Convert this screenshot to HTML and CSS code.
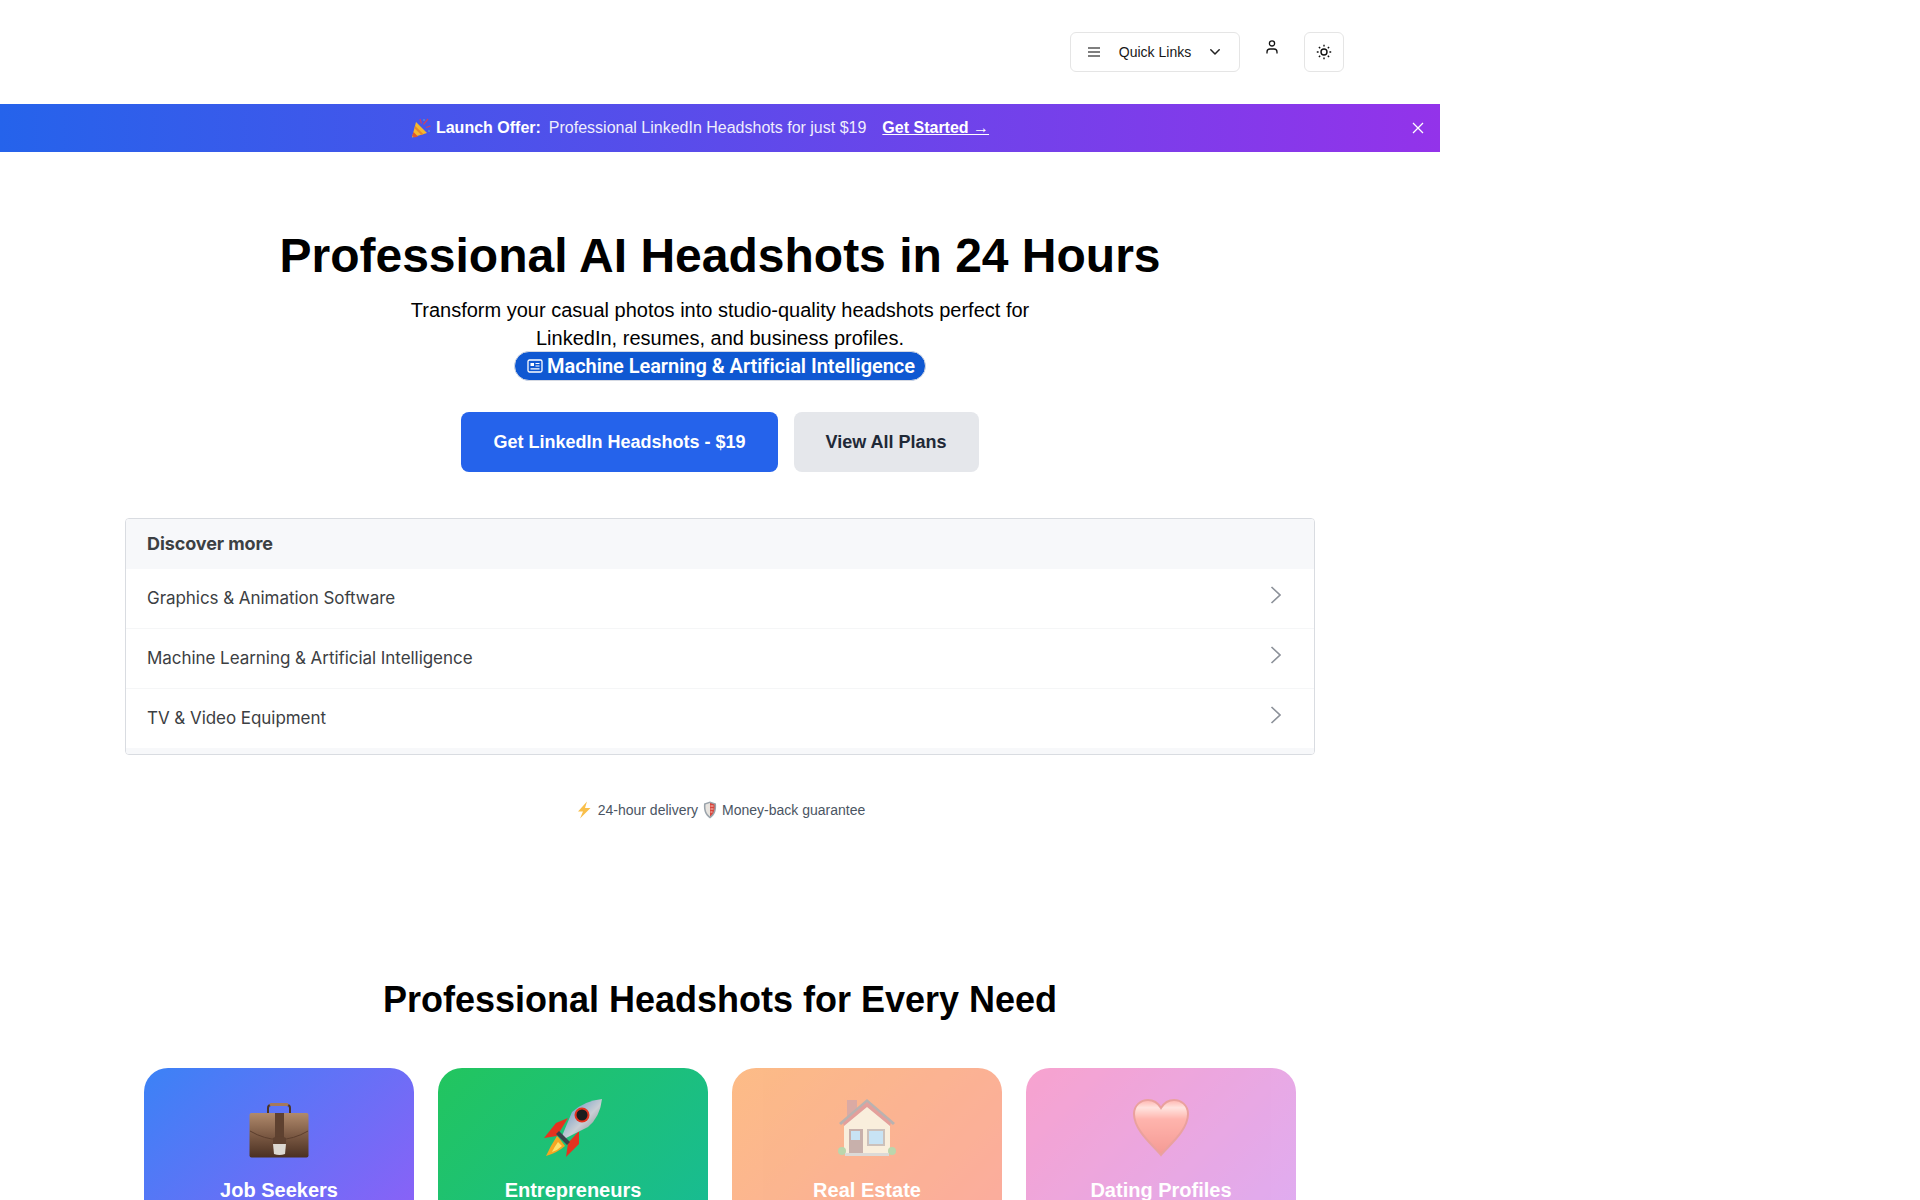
FILE: index.html
```html
<!DOCTYPE html>
<html>
<head>
    <title>Professional AI Headshots in 24 Hours</title>
    <link rel="stylesheet" href="styles.css">
</head>
<body>
<div class="page">
    <!-- Header -->
    <header class="top-bar">
        <button class="quick-links">
            <svg viewBox="0 0 12 10" width="12" height="10"><path d="M0 1h12M0 5h12M0 9h12" stroke="#555" stroke-width="1.600" fill="none"/></svg>
            <span>Quick Links</span>
            <svg viewBox="0 0 10 6" width="10" height="6"><path d="M.8.8 5 5 9.200.8" stroke="#222" stroke-width="1.500" fill="none" stroke-linecap="round" stroke-linejoin="round"/></svg>
        </button>
        <a class="user-link" href="#">
            <svg viewBox="0 0 12 14" width="12" height="14"><circle cx="6" cy="3.400" r="2.600" stroke="#111" stroke-width="1.300" fill="none"/><path d="M1 13.500v-1.500a3 3 0 0 1 3-3h4a3 3 0 0 1 3 3v1.500" stroke="#111" stroke-width="1.300" fill="none"/></svg>
        </a>
        <button class="theme-btn">
            <svg viewBox="0 0 16 16" width="16" height="16"><circle cx="8" cy="8" r="3" stroke="#111" stroke-width="1.400" fill="none"/><path d="M8 .8v1.800M8 13.400v1.800M.8 8h1.800M13.400 8h1.800M2.900 2.900 4.200 4.200M11.800 11.800l1.300 1.300M2.900 13.100l1.300-1.300M11.800 4.200l1.300-1.300" stroke="#111" stroke-width="1.400" fill="none"/></svg>
        </button>
    </header>

    <!-- Banner -->
    <div class="offer-bar">
        <div class="offer-text">
            <svg viewBox="0 0 20 20" width="20" height="20">
                <path d="M1 19.500 5 4l11 11z" fill="#f5b82e"/>
                <path d="M2.500 14l4.500 4.500-4 1-1.800-1.800z" fill="#e0562d"/>
                <path d="M4.200 8l8.300 8.300-2.200.8-6.800-6.800z" fill="#e9862c"/>
                <path d="M9 1l1.500 4.500M17 1l-4.500 5.500M19.500 8l-4.500 1.500" stroke="#c9426a" stroke-width="1.200" fill="none"/>
                <circle cx="13" cy="2" r="1" fill="#4a90d9"/>
                <circle cx="18" cy="13" r="1" fill="#4a90d9"/>
            </svg>
            <strong>Launch Offer:</strong>
            <span class="offer-desc">Professional LinkedIn Headshots for just $19</span>
            <a href="#">Get Started →</a>
        </div>
        <button class="offer-close">
            <svg viewBox="0 0 12 12" width="12" height="12"><path d="M1 1l10 10M11 1 1 11" stroke="#fff" stroke-width="1.300" fill="none"/></svg>
        </button>
    </div>

    <!-- Hero -->
    <section class="hero">
        <h1>Professional AI Headshots in 24 Hours</h1>
        <p class="hero-sub">Transform your casual photos into studio-quality headshots perfect for<br>LinkedIn, resumes, and business profiles.</p>
        <a class="topic-pill" href="#">
            <svg viewBox="0 0 16 14" width="16" height="14"><rect x="1" y="1" width="14" height="12" rx="1.500" stroke="#fff" stroke-width="1.300" fill="none"/><path d="M3.500 4h3.500v3H3.500z" fill="#fff"/><path d="M8.500 4.500h4M8.500 7h4M3.500 9.800h9" stroke="#fff" stroke-width="1.200"/></svg>
            Machine Learning &amp; Artificial Intelligence
        </a>
        <div class="hero-buttons">
            <a class="btn btn-primary" href="#">Get LinkedIn Headshots - $19</a>
            <a class="btn btn-grey" href="#">View All Plans</a>
        </div>
    </section>

    <!-- Discover more -->
    <div class="discover">
        <div class="discover-head">Discover more</div>
        <a class="discover-row" href="#">Graphics &amp; Animation Software
            <svg viewBox="0 0 12 20" width="12" height="20"><path d="M1.500 2 10 10l-8.500 8" stroke="#8c9199" stroke-width="1.700" fill="none"/></svg>
        </a>
        <a class="discover-row" href="#">Machine Learning &amp; Artificial Intelligence
            <svg viewBox="0 0 12 20" width="12" height="20"><path d="M1.500 2 10 10l-8.500 8" stroke="#8c9199" stroke-width="1.700" fill="none"/></svg>
        </a>
        <a class="discover-row last-row" href="#">TV &amp; Video Equipment
            <svg viewBox="0 0 12 20" width="12" height="20"><path d="M1.500 2 10 10l-8.500 8" stroke="#8c9199" stroke-width="1.700" fill="none"/></svg>
        </a>
        <div class="discover-foot"></div>
    </div>

    <div class="trust-row">
        <svg viewBox="0 0 18 18" width="18" height="18"><path d="M12 .5 3 10.500h5L5 17.500 15.500 7H10z" fill="#f9bf4a"/></svg>
        <span>24-hour delivery</span>
        <svg viewBox="0 0 14 18" width="14" height="18"><path d="M7 .5 13 2.500c.500 6-.5 11.500-6 15-5.500-3.500-6.500-9-6-15z" fill="#9aa3ab"/><path d="M7 2 11.500 3.500c.3 5-.5 9-4.500 12z" fill="#d9463d"/><path d="M7 2 2.500 3.500c-.3 5 .5 9 4.500 12z" fill="#e8e4df"/><path d="M7.500 5h3M7.500 8h3M7.500 11h2" stroke="#f3c9c0" stroke-width="1"/></svg>
        <span>Money-back guarantee</span>
    </div>

    <!-- Use cases -->
    <section class="use-cases">
        <h2>Professional Headshots for Every Need</h2>
        <div class="card-grid">
            <div class="card card-blue">
                <svg class="card-emoji" viewBox="0 0 60 60" width="60" height="60">
                    <defs><linearGradient id="case" x1="0" y1="0" x2="0" y2="1"><stop offset="0" stop-color="#b08a6c"/><stop offset=".5" stop-color="#7c5a44"/><stop offset="1" stop-color="#4a3022"/></linearGradient></defs>
                    <path d="M19 16v-6q0-3 3-3h16q3 0 3 3v6" stroke="#4a3326" stroke-width="2" fill="none"/>
                    <path d="M22 6.500h16" stroke="#a5795a" stroke-width="3" stroke-linecap="round"/>
                    <rect x=".5" y="15" width="59" height="44.500" rx="2" fill="url(#case)"/>
                    <path d="M1 33q29 17 58 0" stroke="#5c3e2d" stroke-width="1" fill="none"/>
                    <rect x="26" y="15" width="9" height="28" fill="#5e4130"/>
                    <path d="M24 40q6.500-4 13 0v7H24z" fill="#5e4130"/>
                    <path d="M24 46h13l-1 10q-5.500 2-11 0z" fill="#ddd9d2"/>
                </svg>
                <h3>Job Seekers</h3>
            </div>
            <div class="card card-green">
                <svg class="card-emoji" viewBox="0 0 60 60" width="60" height="60">
                    <defs><linearGradient id="hull" x1="0" y1="0" x2="1" y2="1"><stop offset="0" stop-color="#4f86c0"/><stop offset=".55" stop-color="#c9ced4"/><stop offset="1" stop-color="#6f747a"/></linearGradient></defs>
                    <path d="M25 20 13 25 1 40l13-2z" fill="#e5321f"/>
                    <path d="M36 33v13L23 59l2-14z" fill="#e5321f"/>
                    <path d="M14 38q-6 9-11 20 11-3 19-10l-6-8z" fill="#f5a623"/>
                    <path d="M15 44q-3 4-6 10 6-2 10-6z" fill="#fde26b"/>
                    <path d="M19 38 29 14Q41 3 59 1q-2 18-14 28L21 41z" fill="url(#hull)"/>
                    <path d="M16 33l11 11-3 3-11-11z" fill="#39424a"/>
                    <circle cx="39" cy="17" r="7.500" fill="#e5321f"/>
                    <circle cx="39" cy="17" r="5.500" fill="#1c1c1e"/>
                </svg>
                <h3>Entrepreneurs</h3>
            </div>
            <div class="card card-orange">
                <svg class="card-emoji" viewBox="0 0 60 60" width="60" height="60">
                    <rect x="10" y="2" width="10" height="18" fill="#c4776d"/>
                    <path d="M7 27 30 5l23 22v27q0 2-2 2H9q-2 0-2-2z" fill="#f6e5c8"/>
                    <path d="M2 25 30 1l28 24-2 2L30 6 4 27z" fill="#8f8480"/>
                    <path d="M6 25 30 4l24 21-1 3L30 9 7 28z" fill="#d3665f"/>
                    <rect x="12" y="31" width="14" height="25" fill="#a88179"/>
                    <rect x="14" y="33" width="9" height="9" fill="#a7d3ee"/>
                    <rect x="30" y="31" width="18" height="17" fill="#ae9c92"/>
                    <rect x="32" y="33" width="14" height="13" fill="#a7d3ee"/>
                    <circle cx="5" cy="53" r="4" fill="#93bd7a"/>
                    <circle cx="55" cy="53" r="4" fill="#93bd7a"/>
                    <rect x="8" y="55" width="44" height="3" fill="#c8c5bf"/>
                </svg>
                <h3>Real Estate</h3>
            </div>
            <div class="card card-pink">
                <svg class="card-emoji" viewBox="0 0 60 60" width="60" height="60">
                    <defs><linearGradient id="heart" x1="0" y1="0" x2="0" y2="1"><stop offset="0" stop-color="#ff8f86"/><stop offset=".14" stop-color="#ffd6cf"/><stop offset=".35" stop-color="#ff8d82"/><stop offset="1" stop-color="#f0645b"/></linearGradient></defs>
                    <path d="M30 57C24 49 3 33 3 16 3 7 10 2 17 2c6 0 10 3 13 8 3-5 7-8 13-8 7 0 14 5 14 14 0 17-21 33-27 41z" fill="url(#heart)" stroke="#e0706a" stroke-width="2"/>
                </svg>
                <h3>Dating Profiles</h3>
            </div>
        </div>
    </section>
</div>
</body>
</html>
```

FILE: styles.css
```css
body {
    margin: 0;
    background-color: #fff;
    font-family: "Liberation Sans", Arial, sans-serif;
    color: #000;
}

a {
    text-decoration: none;
}

button {
    font-family: inherit;
    cursor: pointer;
}

.page {
    width: 1440px;
    height: 1200px;
    overflow: hidden;
}

/* Header */
.top-bar {
    height: 104px;
    box-sizing: border-box;
    padding: 32px 96px 0 0;
    display: flex;
    justify-content: flex-end;
    align-items: flex-start;
}

.quick-links {
    width: 170px;
    height: 40px;
    padding: 0 19px 0 17px;
    display: flex;
    align-items: center;
    justify-content: space-between;
    background-color: #fff;
    border: 1px solid #e5e5e5;
    border-radius: 6px;
    font-size: 14px;
    color: #171717;
}

.user-link {
    width: 64px;
    display: flex;
    justify-content: center;
    padding-top: 8px;
}

.theme-btn {
    width: 40px;
    height: 40px;
    padding: 0;
    display: flex;
    align-items: center;
    justify-content: center;
    background-color: #fff;
    border: 1px solid #e5e5e5;
    border-radius: 6px;
}

/* Banner */
.offer-bar {
    height: 48px;
    box-sizing: border-box;
    padding-right: 40px;
    position: relative;
    display: flex;
    align-items: center;
    justify-content: center;
    background: linear-gradient(90deg, #2563eb, #9333ea);
    color: #fff;
    font-size: 16px;
}

.offer-text {
    display: flex;
    align-items: center;
}

.offer-text strong {
    margin-left: 5px;
}

.offer-desc {
    margin-left: 8px;
    opacity: .9;
}

.offer-text a {
    margin-left: 16px;
    color: #fff;
    font-weight: bold;
    text-decoration: underline;
}

.offer-close {
    position: absolute;
    right: 16px;
    top: 18px;
    padding: 0;
    display: flex;
    background: none;
    border: none;
}

/* Hero */
.hero {
    padding-top: 76px;
    text-align: center;
}

h1 {
    margin: 0;
    font-size: 48px;
    line-height: 56px;
    font-weight: bold;
}

.hero-sub {
    margin: 12px 0 -1px;
    font-size: 20px;
    line-height: 28px;
}

.topic-pill {
    display: inline-flex;
    align-items: center;
    gap: 4px;
    box-sizing: border-box;
    height: 30px;
    padding: 0 10px 0 12px;
    background-color: #0f58d2;
    border: 1px solid #d5d9e2;
    border-radius: 15px;
    font-family: Roboto, sans-serif;
    font-size: 20px;
    font-weight: 600;
    letter-spacing: -.04px;
    color: #fff;
    vertical-align: top;
}

.hero-buttons {
    margin-top: 31px;
    display: flex;
    justify-content: center;
    gap: 16px;
}

.btn {
    height: 60px;
    padding: 0 32px;
    display: flex;
    align-items: center;
    border-radius: 8px;
    font-size: 18px;
    font-weight: bold;
}

.btn-primary {
    background-color: #2563eb;
    color: #fff;
}

.btn-grey {
    background-color: #e5e7eb;
    color: #1f2937;
}

/* Discover more */
.discover {
    width: 1190px;
    box-sizing: border-box;
    margin: 46px 0 0 125px;
    background-color: #fff;
    border: 1px solid #d9dce1;
    border-radius: 4px;
    overflow: hidden;
    font-family: Inter, sans-serif;
    color: #3c4043;
}

.discover-head {
    height: 48px;
    padding: 0 0 2px 21px;
    display: flex;
    align-items: center;
    background-color: #f7f8fa;
    font-size: 18px;
    font-weight: 700;
    letter-spacing: -.1px;
}

.discover-row {
    height: 58px;
    padding: 0 32px 1px 21px;
    display: flex;
    align-items: center;
    justify-content: space-between;
    border-bottom: 1px solid #f5f6f7;
    font-size: 17px;
    letter-spacing: -.05px;
    color: #3c4043;
}

.discover-row svg {
    margin-top: -6px;
}

.last-row {
    border-bottom: 0;
}

.discover-foot {
    height: 6px;
    background-color: #f7f8fa;
}

.trust-row {
    margin-top: 46px;
    display: flex;
    align-items: center;
    justify-content: center;
    gap: 5px;
    font-size: 14px;
    color: #4b5563;
}

/* Use cases */
.use-cases {
    margin-top: 161px;
    text-align: center;
}

h2 {
    margin: 0;
    font-size: 36px;
    line-height: 40px;
    font-weight: bold;
}

.card-grid {
    margin-top: 48px;
    display: flex;
    justify-content: center;
    gap: 24px;
}

.card {
    width: 270px;
    height: 300px;
    padding-top: 30px;
    box-sizing: border-box;
    border-radius: 24px;
    color: #fff;
}

.card-emoji {
    display: block;
    margin: 0 auto;
}

h3 {
    margin: 18px 0 0;
    font-size: 20px;
    line-height: 28px;
    font-weight: bold;
}

.card-blue {
    background: linear-gradient(135deg, #3b82f6, #a855f7);
}

.card-green {
    background: linear-gradient(135deg, #22c55e, #14b8a6);
}

.card-orange {
    background: linear-gradient(135deg, #fb923c, #f87171);
    opacity: .62;
}

.card-pink {
    background: linear-gradient(135deg, #f472b6, #c084fc);
    opacity: .65;
}
```
